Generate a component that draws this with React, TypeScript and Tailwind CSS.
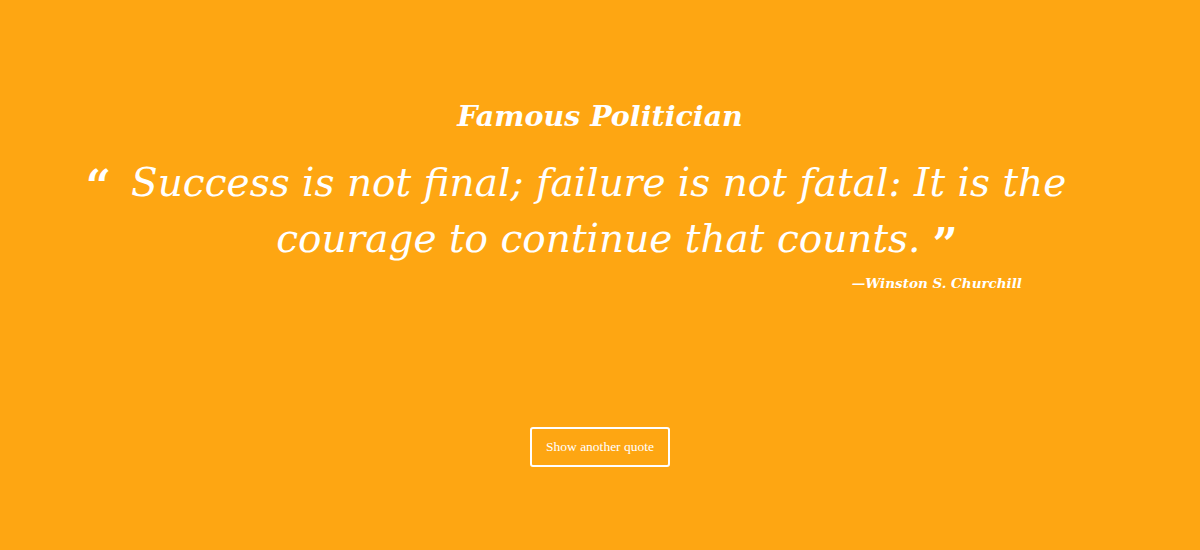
import React from "react";

const serif = "font-['DejaVu_Serif','Liberation_Serif',serif]";

const App = () => {
  return (
    <div className={`h-[550px] w-full bg-[#fea612] text-white ${serif}`}>
      <div className="flex flex-col items-center pt-[95px]">
        <h1 className="text-[28.5px] font-bold italic leading-[42px]">Famous Politician</h1>
        <div className="mt-[20px] w-full text-[39px] italic leading-[52px]">
          <div className="flex justify-center pr-[48px]">
            <span className="mr-[20px] mt-[4px] text-[44px] font-bold not-italic">“</span>
            <span>Success is not final; failure is not fatal: It is the</span>
          </div>
          <div className="flex justify-center pl-[34px]">
            <span>courage to continue that counts.</span>
            <span className="ml-[12px] mt-[6px] text-[44px] font-bold not-italic">”</span>
          </div>
        </div>
        <div className="mt-[2px] flex w-full justify-end pr-[178px]">
          <span className="text-[13.5px] font-bold italic">—Winston S. Churchill</span>
        </div>
        <button className="mt-[134px] h-[40px] w-[140px] rounded-[3px] border-2 border-white font-['Liberation_Serif',serif] text-[13.5px]">
          Show another quote
        </button>
      </div>
    </div>
  );
};

export default App;
